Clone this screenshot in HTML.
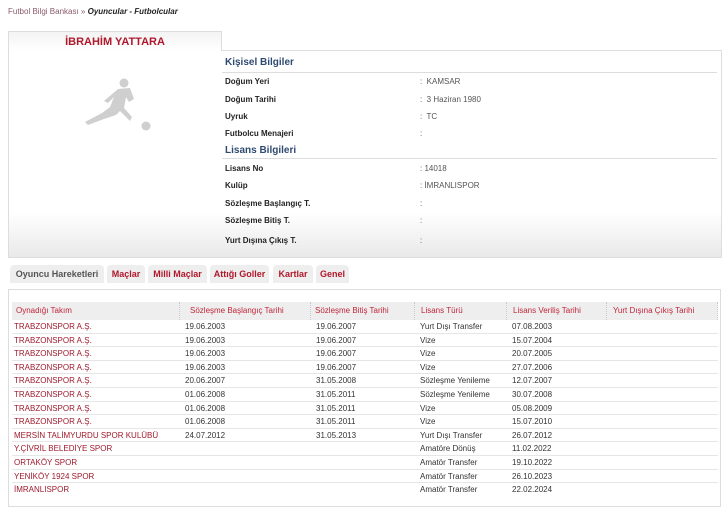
<!DOCTYPE html>
<html><head><meta charset="utf-8"><style>
*{margin:0;padding:0;box-sizing:border-box}
body{width:726px;height:519px;background:#fff;font-family:"Liberation Sans",sans-serif;position:relative;overflow:hidden;color:#333}
.a{position:absolute;white-space:nowrap}
.lbl{font-size:8px;font-weight:bold;color:#222;left:225px}
.val{font-size:8px;color:#555;left:420px}
.tab{position:absolute;top:265px;height:18px;border-radius:4px 4px 0 0;background:#eee;font-size:9px;font-weight:bold;color:#b0182c;text-align:center;line-height:19px}
.r{position:absolute;left:12px;width:706px;height:13.6px;border-bottom:1px solid #e6e6e6;font-size:8px;color:#333;line-height:13px}
.r span{position:absolute}
.r .t{left:2px;color:#9e1a2c}
.h{position:absolute;top:302px;height:18px;background:#eee;font-size:8px;color:#c0263a;line-height:18px;padding-left:4px;border-right:1px dotted #ccc}
</style></head><body>
<div class="a" style="left:8px;top:7px;font-size:8px;color:#8a5a6a">Futbol Bilgi Bankası » <b style="color:#222;font-style:italic">Oyuncular - Futbolcular</b></div>
<div class="a" style="left:8px;top:31px;width:714px;height:227px;border:1px solid #ddd;background:linear-gradient(#fff 0,#fff 80%,#e9e9e9 100%)"></div>
<div class="a" style="left:8px;top:31px;width:214px;height:20px;background:linear-gradient(#f3f3f3,#fff);border:1px solid #ddd;border-bottom:none;text-align:center;font-size:11px;font-weight:bold;color:#b0182c;line-height:20px">İBRAHİM YATTARA</div>
<div class="a" style="left:222px;top:31px;width:500px;height:20px;background:#fff;border-bottom:1px solid #ddd"></div>
<svg class="a" style="left:80px;top:75px" width="75" height="60" viewBox="0 0 75 60"><g fill="#cfcfcf"><circle cx="44" cy="8" r="4.5"/><path d="M38 14 L50 13 L54 24 L49 27 L46 22 L44 33 L52 42 L50 46 L40 36 L36 40 L24 44 L8 50 L5 47 L22 38 L30 32 L34 22 L28 28 L24 26 Z"/><circle cx="66" cy="51" r="4.5"/></g></svg>
<div class="a" style="left:225px;top:57px;font-size:10px;font-weight:bold;color:#2f4a70">Kişisel Bilgiler</div>
<div class="a" style="left:222px;top:72px;width:495px;border-top:1px solid #ddd"></div>
<div class="a lbl" style="top:77px">Doğum Yeri</div><div class="a val" style="top:77px">:&nbsp; KAMSAR</div>
<div class="a lbl" style="top:95px">Doğum Tarihi</div><div class="a val" style="top:95px">:&nbsp; 3 Haziran 1980</div>
<div class="a lbl" style="top:112px">Uyruk</div><div class="a val" style="top:112px">:&nbsp; TC</div>
<div class="a lbl" style="top:129px">Futbolcu Menajeri</div><div class="a val" style="top:129px">:</div>
<div class="a" style="left:225px;top:145px;font-size:10px;font-weight:bold;color:#2f4a70">Lisans Bilgileri</div>
<div class="a" style="left:222px;top:158px;width:495px;border-top:1px solid #ddd"></div>
<div class="a lbl" style="top:164px">Lisans No</div><div class="a val" style="top:164px">: 14018</div>
<div class="a lbl" style="top:181px">Kulüp</div><div class="a val" style="top:181px">: İMRANLISPOR</div>
<div class="a lbl" style="top:199px">Sözleşme Başlangıç T.</div><div class="a val" style="top:199px">:</div>
<div class="a lbl" style="top:216px">Sözleşme Bitiş T.</div><div class="a val" style="top:216px">:</div>
<div class="a lbl" style="top:236px">Yurt Dışına Çıkış T.</div><div class="a val" style="top:236px">:</div>

<div class="tab" style="left:10px;width:94px;color:#555">Oyuncu Hareketleri</div>
<div class="tab" style="left:107px;width:38px">Maçlar</div>
<div class="tab" style="left:148px;width:59px">Milli Maçlar</div>
<div class="tab" style="left:210px;width:59px">Attığı Goller</div>
<div class="tab" style="left:273px;width:40px">Kartlar</div>
<div class="tab" style="left:316px;width:33px">Genel</div>

<div class="a" style="left:8px;top:289px;width:713px;height:218px;border:1px solid #ddd"></div>
<div class="h" style="left:12px;width:168px">Oynadığı Takım</div>
<div class="h" style="left:180px;width:131px;padding-left:10px">Sözleşme Başlangıç Tarihi</div>
<div class="h" style="left:311px;width:104px">Sözleşme Bitiş Tarihi</div>
<div class="h" style="left:415px;width:92px;padding-left:6px">Lisans Türü</div>
<div class="h" style="left:507px;width:100px;padding-left:6px">Lisans Veriliş Tarihi</div>
<div class="h" style="left:607px;width:111px;padding-left:6px">Yurt Dışına Çıkış Tarihi</div>

<div class="r" style="top:320px"><span class="t">TRABZONSPOR A.Ş.</span><span style="left:173px">19.06.2003</span><span style="left:304px">19.06.2007</span><span style="left:408px">Yurt Dışı Transfer</span><span style="left:500px">07.08.2003</span></div>
<div class="r" style="top:333.6px"><span class="t">TRABZONSPOR A.Ş.</span><span style="left:173px">19.06.2003</span><span style="left:304px">19.06.2007</span><span style="left:408px">Vize</span><span style="left:500px">15.07.2004</span></div>
<div class="r" style="top:347.2px"><span class="t">TRABZONSPOR A.Ş.</span><span style="left:173px">19.06.2003</span><span style="left:304px">19.06.2007</span><span style="left:408px">Vize</span><span style="left:500px">20.07.2005</span></div>
<div class="r" style="top:360.8px"><span class="t">TRABZONSPOR A.Ş.</span><span style="left:173px">19.06.2003</span><span style="left:304px">19.06.2007</span><span style="left:408px">Vize</span><span style="left:500px">27.07.2006</span></div>
<div class="r" style="top:374.4px"><span class="t">TRABZONSPOR A.Ş.</span><span style="left:173px">20.06.2007</span><span style="left:304px">31.05.2008</span><span style="left:408px">Sözleşme Yenileme</span><span style="left:500px">12.07.2007</span></div>
<div class="r" style="top:388px"><span class="t">TRABZONSPOR A.Ş.</span><span style="left:173px">01.06.2008</span><span style="left:304px">31.05.2011</span><span style="left:408px">Sözleşme Yenileme</span><span style="left:500px">30.07.2008</span></div>
<div class="r" style="top:401.6px"><span class="t">TRABZONSPOR A.Ş.</span><span style="left:173px">01.06.2008</span><span style="left:304px">31.05.2011</span><span style="left:408px">Vize</span><span style="left:500px">05.08.2009</span></div>
<div class="r" style="top:415.2px"><span class="t">TRABZONSPOR A.Ş.</span><span style="left:173px">01.06.2008</span><span style="left:304px">31.05.2011</span><span style="left:408px">Vize</span><span style="left:500px">15.07.2010</span></div>
<div class="r" style="top:428.8px"><span class="t">MERSİN TALİMYURDU SPOR KULÜBÜ</span><span style="left:173px">24.07.2012</span><span style="left:304px">31.05.2013</span><span style="left:408px">Yurt Dışı Transfer</span><span style="left:500px">26.07.2012</span></div>
<div class="r" style="top:442.4px"><span class="t">Y.ÇİVRİL BELEDİYE SPOR</span><span style="left:408px">Amatöre Dönüş</span><span style="left:500px">11.02.2022</span></div>
<div class="r" style="top:456px"><span class="t">ORTAKÖY SPOR</span><span style="left:408px">Amatör Transfer</span><span style="left:500px">19.10.2022</span></div>
<div class="r" style="top:469.6px"><span class="t">YENİKÖY 1924 SPOR</span><span style="left:408px">Amatör Transfer</span><span style="left:500px">26.10.2023</span></div>
<div class="r" style="top:483.2px;border-bottom:none"><span class="t">İMRANLISPOR</span><span style="left:408px">Amatör Transfer</span><span style="left:500px">22.02.2024</span></div>
</body></html>
